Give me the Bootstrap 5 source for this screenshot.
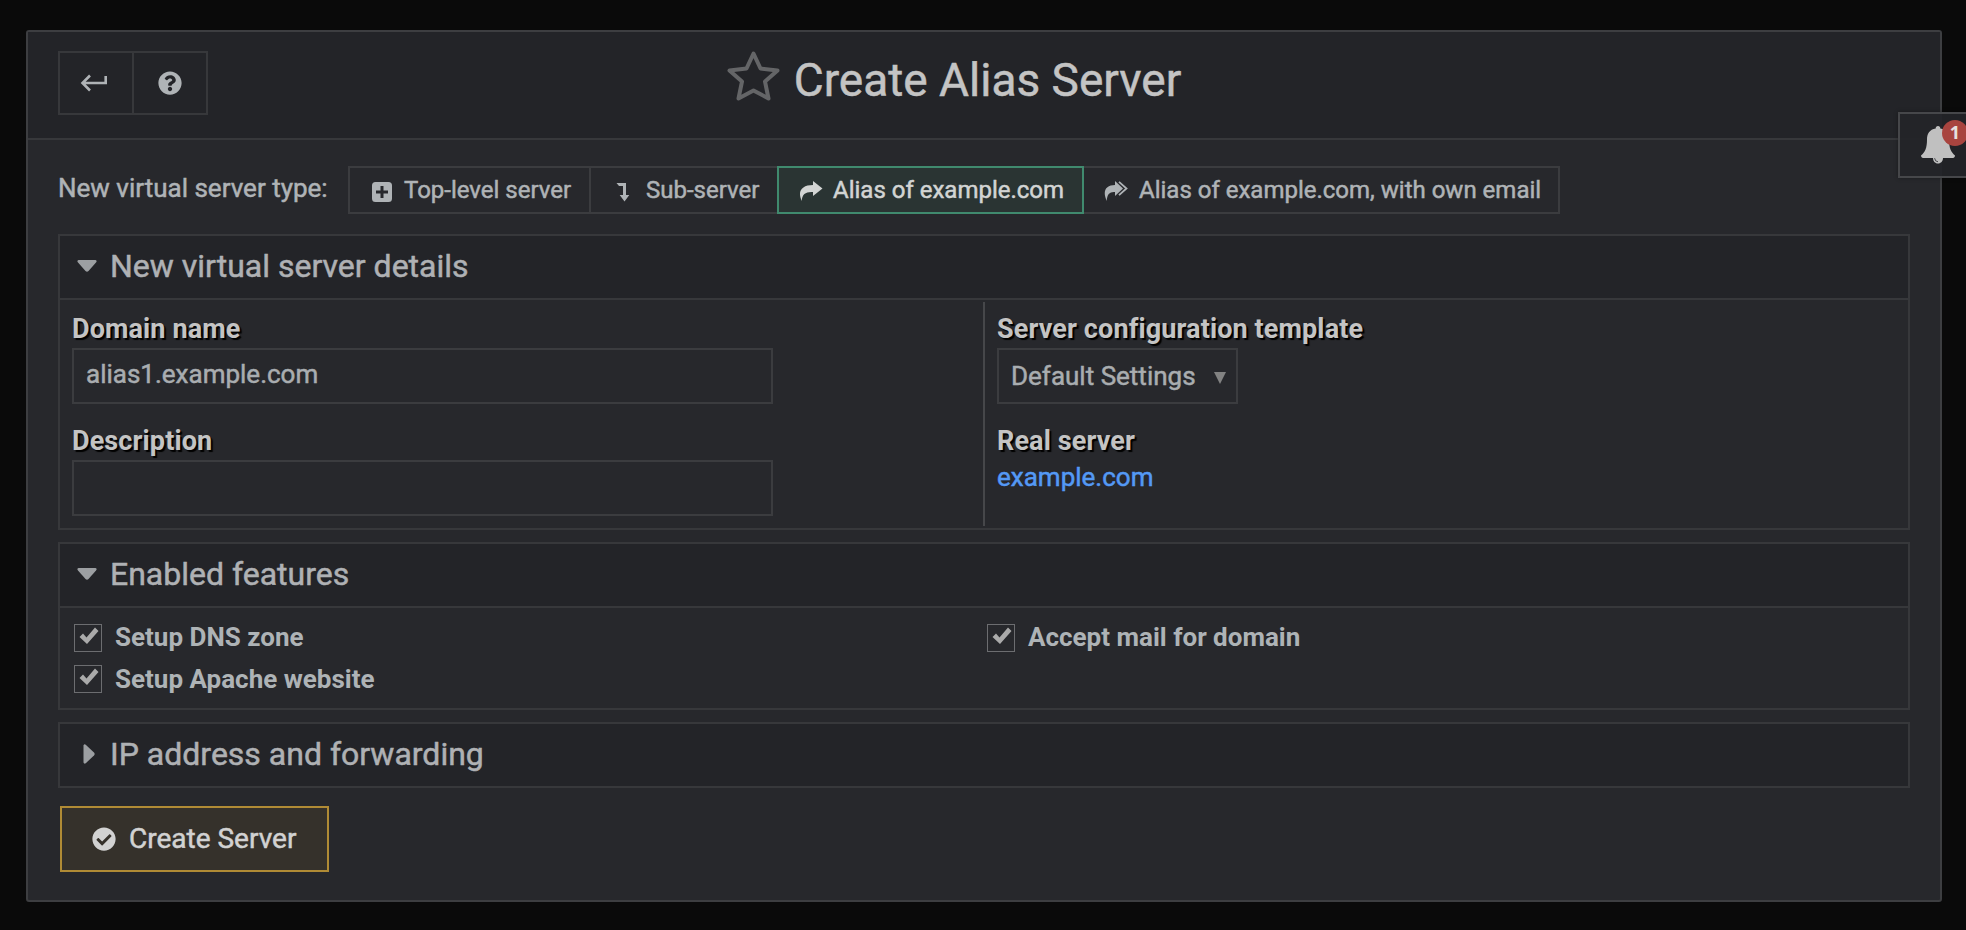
<!DOCTYPE html>
<html lang="en" data-bs-theme="dark">
<head>
<meta charset="utf-8">
<title>Create Alias Server</title>
<link href="https://cdn.jsdelivr.net/npm/bootstrap@5.3.0/dist/css/bootstrap.min.css" rel="stylesheet">
<style>
  body { background: #0a0a0a; color: #afb3b6; font-family: Roboto, "Liberation Sans", sans-serif; font-size: 26px; line-height: 32px; height: 930px; overflow: hidden; -webkit-text-stroke: .5px currentColor; }
  svg { display: block; fill: currentColor; flex: none; }
  .shell { margin: 30px 24px 0 26px; height: 872px; border: 2px solid #3d3e41; border-radius: 3px; background: #27282c; }
  .shell-head { height: 108px; background: #232428; border-bottom: 2px solid #37383b; padding: 19px 30px 0; display: grid; grid-template-columns: 1fr auto 1fr; align-items: start; }
  .tool-group .btn { width: 76px; height: 64px; border: 2px solid #37383b; border-radius: 0; color: #afb3b6; padding: 0; }
  .tool-group .btn:first-child { padding-right: 5px; }
  .tool-group .btn + .btn { margin-left: -2px; }
  h1 { font-size: 46px; line-height: 56px; color: #c4c4c4; font-weight: 400; margin: 1px 0 0; }
  .title-star { color: #646567; margin: -1px 14px 0 0; }
  .title-wrap { margin-left: -60px; }
  .shell-body { padding: 26px 30px 0; }
  .type-label { width: 270px; margin: -5px 20px 0 0; white-space: nowrap; }
  .types .btn { height: 48px; border: 2px solid #3b3c3f; border-radius: 0; color: #afb3b6; font-size: 24px; line-height: 30px; padding: 0 0 0 22px; display: flex; align-items: center; white-space: nowrap; }
  .types.btn-group > .btn + .btn { margin-left: -2px; }
  .types .btn.active { background: #2a3433; border-color: #408a6e; color: #d2d4d3; z-index: 1; }
  .types .w-a { width: 243px; gap: 12px; } .types .w-b { width: 190px; gap: 13px; }
  .types .w-c { width: 307px; gap: 10px; padding-left: 20px; } .types .w-d { width: 478px; gap: 11px; padding-left: 20px; }
  .types svg { margin-top: 3px; }
  .types .w-c svg, .types .w-d svg { margin-top: 1px; }
  .section { border: 2px solid #37383b; margin-bottom: 12px; }
  .section-head { height: 62px; background: #232428; font-size: 32px; line-height: 40px; padding: 0 0 2px 17px; display: flex; align-items: center; color: #afb1b4; }
  .section-head svg { color: #9c9fa2; margin-right: 13px; }
  .section-main { border-top: 2px solid #37383b; }
  .lbl { font-weight: 700; font-size: 27px; color: #c4c4c4; text-shadow: 2px 2px 1px #000; height: 36px; padding-top: 1px; margin: 0; display: block; letter-spacing: .12px; -webkit-text-stroke: 0; }
  .lbl-next { margin-top: 20px; }
  .form-control.inp { width: 701px; height: 56px; border: 2px solid #3b3c3f; border-radius: 0; background: transparent; color: #a9adb0; font-size: 26px; line-height: 32px; padding: 0 12px 5px; }
  .pick { width: 241px; height: 56px; border: 2px solid #3b3c3f; padding: 0 10px 0 12px; color: #a9adb0; }
  .pick svg { color: #828282; margin-top: 3px; }
  .lnk { color: #5499f5; text-decoration: none; display: block; padding-top: 1px; }
  .col-a { width: 923px; padding: 12px 0 0 12px; }
  .col-b { border-left: 2px solid #46474a; padding: 10px 0 0 12px; height: 224px; margin: 2px 0; }
  .feats { height: 102px; }
  .feats > div { padding: 9px 0 0 14px; }
  .feats > div:first-child { width: 913px; }
  .chk { height: 41px; font-weight: 700; color: #aeb3b6; -webkit-text-stroke: 0; }
  .chk:first-child > span:last-child { margin-top: -2px; }
  .tick { width: 28px; height: 28px; border: 1px solid #6c6d70; color: #aaa; margin-right: 13px; flex: none; }
  .create { margin: 18px 0 0 2px; width: 269px; height: 66px; border: 2px solid #b08b35; border-radius: 0; background: #35312b; color: #d2d2d2; font-size: 28px; line-height: 34px; padding: 0 0 0 30px; display: flex; align-items: center; gap: 13px; }
  .bell { position: absolute; left: 1898px; top: 112px; width: 80px; height: 66px; border: 2px solid #46474a; background: rgba(35,36,40,.94); box-shadow: 0 0 4px rgba(0,0,0,.35); color: #c0c0c0; }
  .bell svg { position: absolute; left: 21px; top: 12px; }
  .bell .count { position: absolute; left: 42px; top: 6px; width: 26px; height: 26px; border-radius: 50%; background: #a8443f; color: #e6e0e0; font: 700 18px/25px "Open Sans", sans-serif; text-align: center; -webkit-text-stroke: 0; }
</style>
</head>
<body class="position-relative">
<main class="shell">
  <header class="shell-head">
    <div class="tool-group d-flex">
      <button class="btn d-flex align-items-center justify-content-center" aria-label="Back"><svg width="28" height="18" viewBox="0 0 28 18" stroke="currentColor" stroke-width="2.6" style="fill:none"><path d="M10 1.500 2.500 9 10 16.500M2.500 9H25.700V2"/></svg></button>
      <button class="btn d-flex align-items-center justify-content-center" aria-label="Help"><svg width="24" height="24" viewBox="0 0 512 512"><path d="M504 256c0 136.997-111.043 248-248 248S8 392.997 8 256C8 119.083 119.043 8 256 8s248 111.083 248 248zM262.655 90c-54.497 0-89.255 22.957-116.549 63.758-3.536 5.286-2.353 12.415 2.715 16.258l34.699 26.310c5.205 3.947 12.621 3.008 16.665-2.122 17.864-22.658 30.113-35.797 57.303-35.797 20.429 0 45.698 13.148 45.698 32.958 0 14.976-12.363 22.667-32.534 33.976C247.128 238.528 216 254.941 216 296v4c0 6.627 5.373 12 12 12h56c6.627 0 12-5.373 12-12v-1.333c0-28.462 83.186-29.647 83.186-106.667 0-58.002-60.165-102-116.531-102zM256 338c-25.365 0-46 20.635-46 46 0 25.364 20.635 46 46 46s46-20.636 46-46c0-25.365-20.635-46-46-46z"/></svg></button>
    </div>
    <div class="title-wrap d-flex">
      <svg class="title-star" width="53" height="52" viewBox="0 0 53 52" style="fill:none" stroke="currentColor" stroke-width="4" stroke-linejoin="round"><path d="M26.500 3.500 33.500 18.500 50.500 20.500 38 31.500 41.500 48.500 26.500 40.500 11.500 48.500 15 31.500 2.500 20.500 19.500 18.500Z"/></svg>
      <h1>Create Alias Server</h1>
    </div>
    <div></div>
  </header>
  <div class="shell-body">
    <div class="d-flex align-items-center mb-3 pb-1">
      <span class="type-label">New virtual server type:</span>
      <div class="types btn-group">
        <button class="btn w-a"><svg width="20" height="20" viewBox="0 0 20 20"><path fill-rule="evenodd" d="M3.500 0H16.500A3.500 3.500 0 0 1 20 3.500V16.500A3.500 3.500 0 0 1 16.500 20H3.500A3.500 3.500 0 0 1 0 16.500V3.500A3.500 3.500 0 0 1 3.500 0ZM8.500 4V8.500H4V11.500H8.500V16H11.500V11.500H16V8.500H11.500V4Z"/></svg><span>Top-level server</span></button>
        <button class="btn w-b"><svg width="20" height="20" viewBox="0 0 20 20"><path d="M3.500 1H13V13H16.300L11.500 19.500 6.700 13H10V4H6Z"/></svg><span>Sub-server</span></button>
        <button class="btn w-c active"><svg width="24" height="20" viewBox="0 0 24 20"><path d="M14 0 23.500 7.500 14 15V11C7 10.500 3 13 2.800 20 -2 10 3 4 14 4Z"/></svg><span>Alias of example.com</span></button>
        <button class="btn w-d"><svg width="24" height="20" viewBox="0 0 24 20"><path d="M11 0 19 7.500 11 15V11C6 10.500 3 13 2.800 20 -2 10 2 4 11 4Z"/><path d="M15 .8 22.500 7.500 15 14.200" style="fill:none" stroke="currentColor" stroke-width="1.800"/></svg><span>Alias of example.com, with own email</span></button>
      </div>
    </div>
    <section class="section">
      <div class="section-head"><svg width="20" height="12" viewBox="0 0 20 12"><path d="M1.500 0H18.500Q20.500 .8 19 2.500L11.500 11Q10 12.300 8.500 11L1 2.500Q-.5 .8 1.500 0Z"/></svg><span>New virtual server details</span></div>
      <div class="section-main d-flex">
        <div class="col-a">
          <label class="lbl" for="dom">Domain name</label>
          <input id="dom" class="form-control inp" value="alias1.example.com">
          <label class="lbl lbl-next" for="desc">Description</label>
          <input id="desc" class="form-control inp">
        </div>
        <div class="col-b">
          <label class="lbl">Server configuration template</label>
          <div class="pick d-flex align-items-center justify-content-between"><span>Default Settings</span><svg width="12" height="12" viewBox="0 0 12 12"><path d="M0 0H12L6 12Z"/></svg></div>
          <label class="lbl lbl-next">Real server</label>
          <a class="lnk" href="#">example.com</a>
        </div>
      </div>
    </section>
    <section class="section">
      <div class="section-head"><svg width="20" height="12" viewBox="0 0 20 12"><path d="M1.500 0H18.500Q20.500 .8 19 2.500L11.500 11Q10 12.300 8.500 11L1 2.500Q-.5 .8 1.500 0Z"/></svg><span>Enabled features</span></div>
      <div class="section-main feats d-flex">
        <div>
          <div class="chk d-flex align-items-center"><span class="tick"><svg width="26" height="26" viewBox="0 0 26 26"><path d="M4.500 12 8 8.500 11.500 12.500 20 2.500 23.500 6 12 19Z"/></svg></span><span>Setup DNS zone</span></div>
          <div class="chk d-flex align-items-center"><span class="tick"><svg width="26" height="26" viewBox="0 0 26 26"><path d="M4.500 12 8 8.500 11.500 12.500 20 2.500 23.500 6 12 19Z"/></svg></span><span>Setup Apache website</span></div>
        </div>
        <div>
          <div class="chk d-flex align-items-center"><span class="tick"><svg width="26" height="26" viewBox="0 0 26 26"><path d="M4.500 12 8 8.500 11.500 12.500 20 2.500 23.500 6 12 19Z"/></svg></span><span>Accept mail for domain</span></div>
        </div>
      </div>
    </section>
    <section class="section mb-0">
      <div class="section-head"><svg width="20" height="20" viewBox="0 0 20 20"><path d="M6.500 1.500Q7.300-.5 9 1L17 8.500Q18.300 10 17 11.500L9 19Q7.300 20.500 6.500 18.500Z"/></svg><span>IP address and forwarding</span></div>
    </section>
    <button class="btn create"><svg width="24" height="24" viewBox="0 0 512 512"><path d="M504 256c0 136.967-111.033 248-248 248S8 392.967 8 256 119.033 8 256 8s248 111.033 248 248zM227.314 387.314l184-184c6.248-6.248 6.248-16.379 0-22.627l-22.627-22.627c-6.248-6.249-16.379-6.249-22.628 0L216 308.118l-70.059-70.059c-6.248-6.248-16.379-6.248-22.628 0l-22.627 22.627c-6.248 6.248-6.248 16.379 0 22.627l104 104c6.249 6.249 16.379 6.249 22.628.001z"/></svg><span>Create Server</span></button>
  </div>
</main>
<aside class="bell"><svg width="34" height="38" viewBox="0 0 34 38"><path d="M17 0C18.500 0 19.300 1 19.300 2.500 25.500 3.500 28 8 28 13.500 28 22 30 26 34 29.500 34 31 33 32 32 32H22C22 35 20 37.500 17 37.500S12 35 12 32H2C1 32 0 31 0 29.500 4 26 6 22 6 13.500 6 8 8.500 3.500 14.700 2.500 14.700 1 15.500 0 17 0Z"/><path d="M13.600 32.200Q14 35.600 17 35.800" style="fill:none" stroke="#45464a" stroke-width="1"/></svg><span class="count">1</span></aside>
<script src="https://cdn.jsdelivr.net/npm/bootstrap@5.3.0/dist/js/bootstrap.bundle.min.js"></script>
</body>
</html>
